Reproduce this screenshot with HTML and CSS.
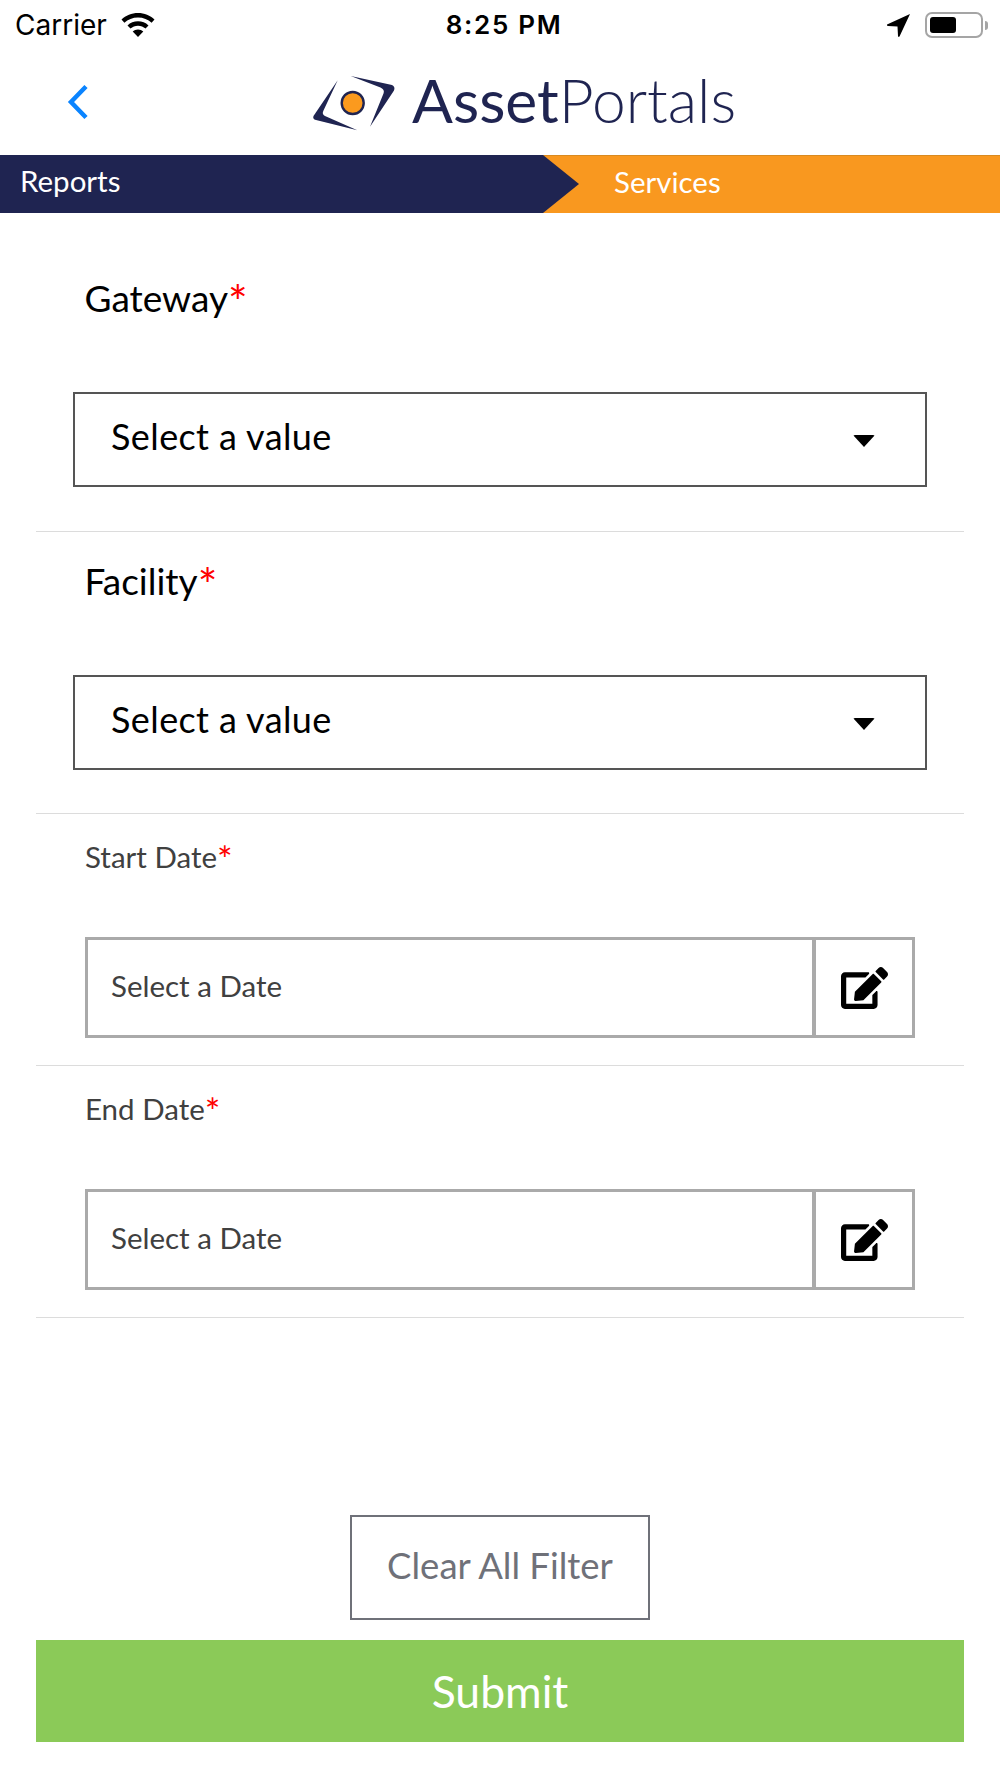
FILE: index.html
```html
<!DOCTYPE html>
<html lang="en">
<head>
<meta charset="utf-8">
<title>AssetPortals – Services</title>
<link rel="stylesheet" href="styles.css">
</head>
<body>
<div class="status">
  <div class="status-left">
    <span class="carrier">Carrier</span>
    <svg class="wifi" viewBox="0 0 34 24"><path d="M17 0C10.600 0 4.800 2.500 0.500 6.500L3.400 9.700C6.900 6.400 11.700 4.400 17 4.400S27.100 6.400 30.600 9.700L33.500 6.500C29.200 2.500 23.400 0 17 0Z M17 8.300C13 8.300 9.300 9.800 6.500 12.400L9.500 15.600C11.500 13.800 14.100 12.700 17 12.700S22.500 13.800 24.500 15.600L27.500 12.400C24.700 9.800 21 8.300 17 8.300Z M17 16.500C15 16.500 13.100 17.300 11.700 18.500L17 24L22.300 18.500C20.900 17.300 19 16.500 17 16.500Z"/></svg>
  </div>
  <div class="clock">8:25 PM</div>
  <div class="status-right">
    <svg class="locate" viewBox="0 0 23 23"><path d="M23 0L0 10.500Q-0.500 11.500 1 12L10.500 12.500L11 22Q11.500 23.500 12.500 22.500Z"/></svg>
    <div class="battery"><div class="battery-fill"></div></div>
    <div class="battery-cap"></div>
  </div>
</div>

<header class="nav">
  <svg class="back" viewBox="0 0 24 36"><path d="M20 2.500L5 18L20 33.500" fill="none" stroke="#0a84ff" stroke-width="4.500"/></svg>
  <svg class="mark" viewBox="12 34 84 58">
    <path d="M37.700 39.300L13.500 75Q12.300 78 16 79L57.300 89.300L25 75Q21.500 73 23.500 69.500Z" fill="#1f2451"/>
    <path d="M50.700 35L92 44Q95.500 45.500 94 49.500L70 85.700L83.500 52.500Q85 48.500 80.500 46.500Z" fill="#1f2451"/>
    <circle cx="52.700" cy="62" r="11" fill="#fb9a1e" stroke="#1f2451" stroke-width="2.400"/>
  </svg>
  <div class="brand"><span class="brand-strong">Asset</span>Portals</div>
</header>

<nav class="crumbs">
  <div class="crumb-reports">Reports</div>
  <div class="crumb-services">Services</div>
</nav>

<main class="form">
  <section class="field field-select field-first">
    <div class="label-lg">Gateway<span class="req">*</span></div>
    <div class="select"><span class="select-text">Select a value</span><i class="caret"></i></div>
  </section>
  <section class="field field-select">
    <div class="label-lg">Facility<span class="req">*</span></div>
    <div class="select"><span class="select-text">Select a value</span><i class="caret"></i></div>
  </section>
  <section class="field field-date">
    <div class="label-sm">Start Date<span class="req">*</span></div>
    <div class="date">
      <div class="date-text">Select a Date</div>
      <div class="date-btn"><svg class="edit" viewBox="0 0 576 512"><path d="M402.600 83.200l90.200 90.200c3.800 3.800 3.800 10 0 13.800L274.400 405.600l-92.800 10.300c-12.400 1.400-22.900-9.100-21.500-21.500l10.300-92.800L388.800 83.200c3.800-3.800 10-3.800 13.800 0zm162-22.900l-48.800-48.800c-15.200-15.200-39.900-15.200-55.200 0l-35.400 35.400c-3.800 3.800-3.800 10 0 13.800l90.200 90.200c3.800 3.800 10 3.800 13.800 0l35.400-35.400c15.200-15.300 15.200-40 0-55.200zM384 346.200V448H64V128h229.800c3.200 0 6.200-1.300 8.500-3.500l40-40c7.600-7.600 2.200-20.500-8.500-20.500H48C21.500 64 0 85.500 0 112v352c0 26.500 21.500 48 48 48h352c26.500 0 48-21.500 48-48V306.200c0-10.700-12.900-16-20.500-8.500l-40 40c-2.200 2.300-3.500 5.300-3.500 8.500z"/></svg></div>
    </div>
  </section>
  <section class="field field-date">
    <div class="label-sm">End Date<span class="req">*</span></div>
    <div class="date">
      <div class="date-text">Select a Date</div>
      <div class="date-btn"><svg class="edit" viewBox="0 0 576 512"><path d="M402.600 83.200l90.200 90.200c3.800 3.800 3.800 10 0 13.800L274.400 405.600l-92.800 10.300c-12.400 1.400-22.900-9.100-21.500-21.500l10.300-92.800L388.800 83.200c3.800-3.800 10-3.800 13.800 0zm162-22.900l-48.800-48.800c-15.200-15.200-39.900-15.200-55.200 0l-35.400 35.400c-3.800 3.800-3.800 10 0 13.800l90.200 90.200c3.800 3.800 10 3.800 13.800 0l35.400-35.400c15.200-15.300 15.200-40 0-55.200zM384 346.200V448H64V128h229.800c3.200 0 6.200-1.300 8.500-3.500l40-40c7.600-7.600 2.200-20.500-8.500-20.500H48C21.500 64 0 85.500 0 112v352c0 26.500 21.500 48 48 48h352c26.500 0 48-21.500 48-48V306.200c0-10.700-12.900-16-20.500-8.500l-40 40c-2.200 2.300-3.500 5.300-3.500 8.500z"/></svg></div>
    </div>
  </section>
</main>

<div class="actions">
  <button class="clear"><span class="clear-text">Clear All Filter</span></button>
  <button class="submit">Submit</button>
</div>
</body>
</html>
```
FILE: styles.css
```css
* { box-sizing: border-box; }
html, body { margin: 0; padding: 0; }
body {
  width: 1000px;
  height: 1778px;
  background: #fff;
  font-family: Lato, "Noto Sans", sans-serif;
  color: #000;
  overflow: hidden;
}
.status {
  height: 50px;
  display: grid;
  grid-template-columns: 1fr auto 1fr;
  align-items: center;
  padding: 0 12px 0 15px;
}
.status-left { display: flex; align-items: center; gap: 14px; }
.carrier { font-family: Inter, sans-serif; font-size: 28px; line-height: 50px; }
.wifi { width: 34px; height: 24px; }
.clock { font-family: Inter, sans-serif; font-size: 26px; font-weight: 600; letter-spacing: 1.700px; line-height: 50px; margin-left: 5px; }
.status-right { display: flex; align-items: center; justify-content: flex-end; }
.locate { width: 23px; height: 23px; margin-right: 15px; }
.battery {
  width: 58px;
  height: 26px;
  border: 2px solid #a5a5a5;
  border-radius: 7px;
  padding: 3px;
}
.battery-fill { height: 16px; background: #000; border-radius: 3px; width: 26px; }
.battery-cap { width: 3px; height: 9px; background: #a5a5a5; margin-left: 2px; border-radius: 0 3px 3px 0; }

.nav { height: 105px; display: flex; align-items: center; padding-left: 66px; }
.back { width: 24px; height: 36px; margin-bottom: 2px; }
.mark { width: 84px; height: 58px; margin-left: 222px; margin-top: 2px; }
.brand { font-size: 60.500px; color: #1f2451; margin-left: 16px; line-height: 1; font-weight: 300; margin-top: -5px; }
.brand-strong { font-weight: 400; }

.crumbs {
  height: 58px;
  display: flex;
  background: #f9981f;
  border-top: 1px solid #d98a20;
  color: #fff;
  font-size: 29.500px;
  line-height: 52px;
}
.crumb-reports {
  width: 579px;
  margin-top: -1px;
  height: 58px;
  background: #1f2451;
  clip-path: polygon(0 0, 543px 0, 100% 50%, 543px 100%, 0 100%);
  padding-left: 20px;
}
.crumb-services { padding-left: 35px; }

.form { padding: 0 36px; }
.field { border-bottom: 1px solid #dcdcdc; }
.field-select { height: 282px; padding-top: 24px; }
.field-first { height: 319px; padding-top: 60px; }
.field-date { height: 252px; padding-top: 23px; }
.label-lg { font-size: 37px; line-height: 50px; padding-left: 48.500px; }
.label-sm { font-size: 29.500px; line-height: 40px; padding-left: 49px; color: #404040; }
.req { color: #f00; font-size: 1.250em; line-height: 0; vertical-align: -7px; }
.label-sm .req { vertical-align: -5px; }
.select {
  width: 854px;
  height: 95px;
  margin: 69px 0 0 37px;
  border: 2px solid #555;
  display: flex;
  align-items: center;
  justify-content: space-between;
  padding: 0 50px 0 36px;
  font-size: 36px;
  letter-spacing: 0.400px;
}
.select-text { padding-bottom: 8px; }
.caret {
  width: 0;
  height: 0;
  border-left: 11px solid transparent;
  border-right: 11px solid transparent;
  border-top: 12px solid #000;
  border-radius: 2px;
  margin-top: 2px;
}
.date {
  width: 830px;
  height: 101px;
  margin: 60px 0 0 49px;
  border: 3px solid #aaa;
  display: flex;
}
.date-text {
  flex: 1;
  display: flex;
  align-items: center;
  padding: 0 0 4px 23px;
  font-size: 29.500px;
  color: #404040;
}
.date-btn {
  width: 100px;
  border-left: 4px solid #aaa;
  display: flex;
  align-items: center;
  justify-content: center;
}
.edit { width: 47px; height: 42px; }

.actions {
  display: flex;
  flex-direction: column;
  align-items: center;
  padding-top: 197px;
}
.clear {
  width: 300px;
  height: 105px;
  background: #fff;
  border: 2px solid #6f7179;
  color: #6f7179;
  font-family: Lato, sans-serif;
  font-size: 36.500px;
  padding: 0 0 6px;
}
.submit {
  width: 928px;
  height: 102px;
  margin-top: 20px;
  background: #8bca58;
  border: 0;
  color: #fff;
  font-family: Lato, sans-serif;
  font-size: 44.500px;
  padding: 0 0 2px;
}
```
